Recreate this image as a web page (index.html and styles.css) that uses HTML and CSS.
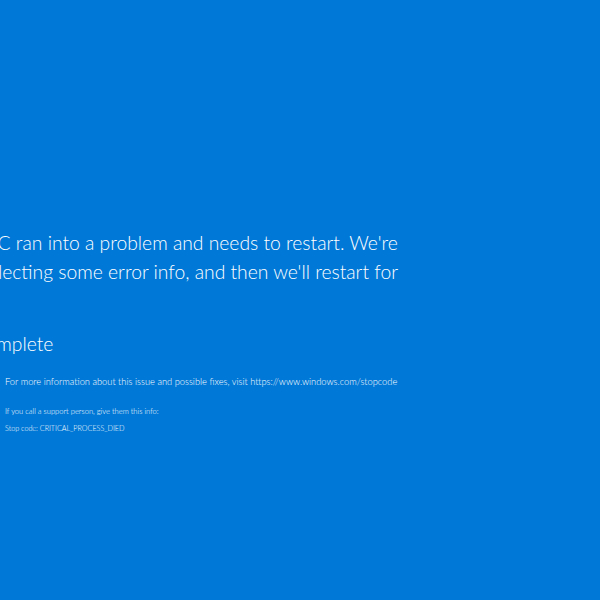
FILE: index.html
```html
<!DOCTYPE html>
<html>
<head>
<meta charset="utf-8">
<link rel="stylesheet" href="styles.css">
</head>
<body>
<div class="screen">
  <div class="content">
    <div class="face">:(</div>
    <p class="msg"><span class="line line1">Your PC ran into a problem and needs to restart. We're</span><span class="line line2">collecting some error info, and then we'll restart for</span><span class="line">you.</span></p>
    <p class="progress">20% complete</p>
    <div class="info">
      <div class="qr"></div>
      <div class="details">
        <p class="more">For more information about this issue and possible fixes, visit https://www.windows.com/stopcode</p>
        <p class="support">If you call a support person, give them this info:</p>
        <p class="code">Stop code: CRITICAL_PROCESS_DIED</p>
      </div>
    </div>
  </div>
</div>
</body>
</html>
```
FILE: styles.css
```css
html, body {
  margin: 0;
  padding: 0;
  width: 600px;
  height: 600px;
  overflow: hidden;
  background: #0078d7;
}
.screen {
  width: 600px;
  height: 600px;
  overflow: hidden;
  background: #0078d7;
  color: #ffffff;
  font-family: "Lato", "Open Sans", sans-serif;
  font-weight: 300;
}
.content {
  margin-left: -66px;
  padding-top: 128px;
}
.face {
  font-size: 90px;
  line-height: 100px;
  height: 100px;
}
.msg {
  margin: 0;
  font-size: 19.3px;
  line-height: 29px;
}
.line {
  display: block;
  white-space: nowrap;
}
.line1 {
  padding-left: 10px;
}
.line2 {
  padding-left: 40px;
}
.progress {
  margin: 14px 0 0 0;
  font-size: 19.3px;
  line-height: 29px;
}
.info {
  display: flex;
  gap: 14px;
  margin-top: 18px;
}
.qr {
  width: 57px;
  height: 57px;
  background: #ffffff;
}
.details p {
  margin: 0;
  white-space: nowrap;
}
.more {
  font-size: 9.3px;
  line-height: 12px;
}
.support {
  margin-top: 19px !important;
  font-size: 7.55px;
  line-height: 10px;
}
.code {
  margin-top: 7px !important;
  font-size: 7.2px;
  line-height: 10px;
}
```
